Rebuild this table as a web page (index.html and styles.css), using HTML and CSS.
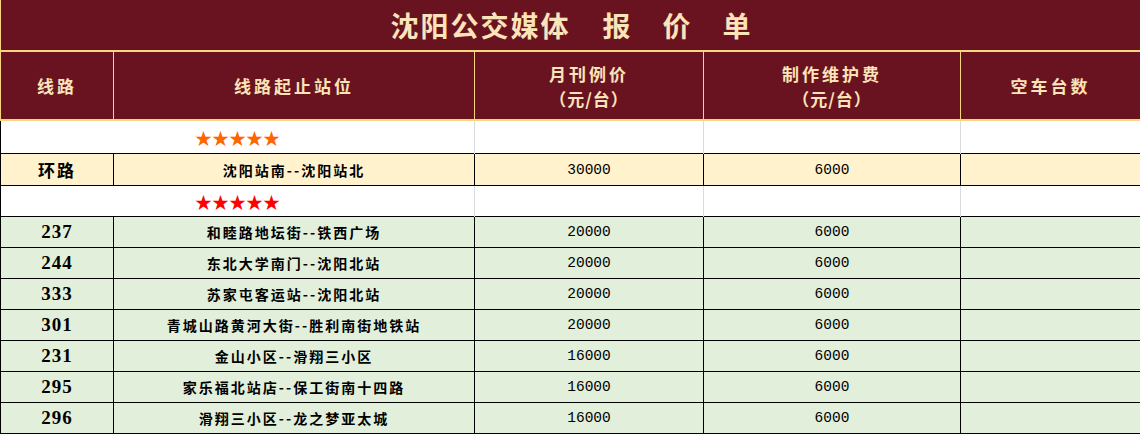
FILE: index.html
```html
<!DOCTYPE html>
<html lang="zh-CN">
<head>
<meta charset="utf-8">
<title>沈阳公交媒体报价单</title>
<link rel="stylesheet" href="styles.css">
</head>
<body>
<table class="sheet">
  <colgroup>
    <col class="c1"><col class="c2"><col class="c3"><col class="c4"><col class="c5">
  </colgroup>
  <tr class="title-row">
    <td colspan="5" class="title"><span class="t-main">沈阳公交媒体</span><span class="t-w">报</span><span class="t-w">价</span><span class="t-w">单</span></td>
  </tr>
  <tr class="head-row">
    <td>线路</td>
    <td>线路起止站位</td>
    <td>月刊例价<br><span class="unit">（元/台）</span></td>
    <td>制作维护费<br><span class="unit">（元/台）</span></td>
    <td>空车台数</td>
  </tr>
  <tr class="star-row first">
    <td colspan="2" class="stars orange">★★★★★</td><td></td><td></td><td></td>
  </tr>
  <tr class="row yellow">
    <td class="line">环路</td><td class="route">沈阳站南--沈阳站北</td><td class="num">30000</td><td class="num">6000</td><td></td>
  </tr>
  <tr class="star-row second">
    <td colspan="2" class="stars red">★★★★★</td><td></td><td></td><td></td>
  </tr>
  <tr class="row green">
    <td class="line">237</td><td class="route">和睦路地坛街--铁西广场</td><td class="num">20000</td><td class="num">6000</td><td></td>
  </tr>
  <tr class="row green">
    <td class="line">244</td><td class="route">东北大学南门--沈阳北站</td><td class="num">20000</td><td class="num">6000</td><td></td>
  </tr>
  <tr class="row green">
    <td class="line">333</td><td class="route">苏家屯客运站--沈阳北站</td><td class="num">20000</td><td class="num">6000</td><td></td>
  </tr>
  <tr class="row green">
    <td class="line">301</td><td class="route">青城山路黄河大街--胜利南街地铁站</td><td class="num">20000</td><td class="num">6000</td><td></td>
  </tr>
  <tr class="row green">
    <td class="line">231</td><td class="route">金山小区--滑翔三小区</td><td class="num">16000</td><td class="num">6000</td><td></td>
  </tr>
  <tr class="row green">
    <td class="line">295</td><td class="route">家乐福北站店--保工街南十四路</td><td class="num">16000</td><td class="num">6000</td><td></td>
  </tr>
  <tr class="row green">
    <td class="line">296</td><td class="route">滑翔三小区--龙之梦亚太城</td><td class="num">16000</td><td class="num">6000</td><td></td>
  </tr>
</table>
</body>
</html>
```

FILE: styles.css
```css
html, body {
  margin: 0;
  padding: 0;
  background: #ffffff;
}

.sheet {
  border-collapse: collapse;
  table-layout: fixed;
  width: 1140px;
  font-family: "Noto Sans CJK SC", "Noto Sans", sans-serif;
}

.c1 { width: 113px; }
.c2 { width: 361px; }
.c3 { width: 229px; }
.c4 { width: 257px; }
.c5 { width: 180px; }

td {
  padding: 0;
  text-align: center;
  vertical-align: middle;
  overflow: hidden;
}

/* title */
.title-row td {
  height: 50px;
  background: #6a1320;
  color: #fbe4b9;
  border-left: 1px solid #f6d77f;
  border-right: 1px solid #f6d77f;
  border-bottom: 2px solid #f6d77f;
  font-size: 28px;
  font-weight: 700;
  line-height: 30px;
}

.t-main {
  letter-spacing: 2px;
}

.t-w {
  margin-left: 32px;
}
.t-w:first-of-type {
  margin-left: 6px;
}

/* header */
.head-row td {
  height: 67px;
  background: #6a1320;
  color: #fbe4b9;
  border: 1px solid #f6d77f;
  border-bottom-width: 2px;
  font-size: 17px;
  font-weight: 700;
  line-height: 25px;
  letter-spacing: 3px;
}

.unit {
  letter-spacing: 1px;
}

/* star rows */
.star-row td {
  height: 32px;
  background: #ffffff;
  border-left: 1px solid #dadada;
  border-right: 1px solid #dadada;
  line-height: 17px;
}

.star-row.second td {
  height: 30px;
}

.star-row td.stars {
  border-left: 1px solid #000000;
  font-family: "Noto Sans CJK SC", "DejaVu Sans", sans-serif;
  font-size: 17px;
  letter-spacing: 0;
}

.orange { color: #ff6600; }
.red { color: #ff0000; }

/* data rows */
.row td {
  height: 30px;
  border: 1px solid #000000;
  color: #000000;
  line-height: 20px;
}

.yellow td { background: #fff2cc; height: 31px; }
.green td { background: #e2efda; }

.line {
  font-family: "Liberation Serif", "Noto Sans CJK SC", serif;
  font-size: 19px;
  font-weight: 700;
  letter-spacing: 1px;
  color: #111111;
}

.yellow .line {
  font-family: "Noto Sans CJK SC", serif;
  font-size: 17px;
  letter-spacing: 2px;
}

.route {
  font-size: 14px;
  font-weight: 700;
  letter-spacing: 2px;
}

.num {
  font-family: "Liberation Mono", "DejaVu Sans Mono", monospace;
  font-size: 14.5px;
  letter-spacing: 0;
}
```
